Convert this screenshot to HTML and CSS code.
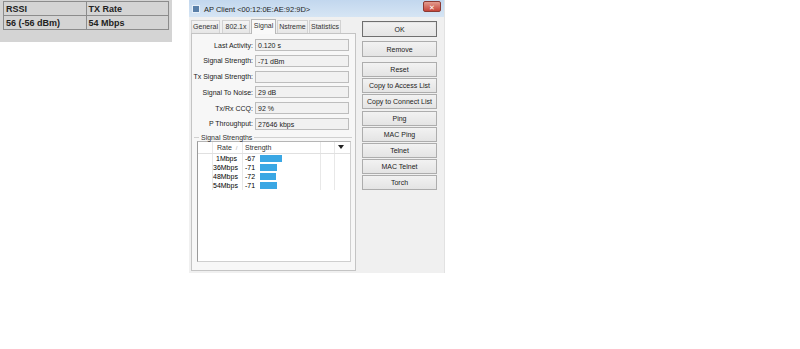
FILE: index.html
```html
<!DOCTYPE html>
<html lang="en">
<head>
    <meta charset="utf-8">
    <title>AP Client</title>
    <link rel="stylesheet" href="styles.css">
</head>
<body>
<div class="page">

    <div class="info"><!-- registration summary -->
        <table class="rates">
            <tr><td>RSSI</td><td>TX Rate</td></tr>
            <tr><td>56 (-56 dBm)</td><td>54 Mbps</td></tr>
        </table>
    </div>

    <div class="win">
        <div class="titlebar">
            <span class="appicon"></span>
            <span class="title">AP Client &lt;00:12:0E:AE:92:9D&gt;</span>
            <span class="close">&#x2715;</span>
        </div>

        <div class="winbody">
            <div class="left">
                <div class="tabs">
                    <span class="tab t-general">General</span>
                    <span class="tab t-dot">802.1x</span>
                    <span class="tab t-signal active">Signal</span>
                    <span class="tab t-nstreme">Nstreme</span>
                    <span class="tab t-stats">Statistics</span>
                </div>

                <div class="panel">
                    <div class="row"><span class="lbl">Last Activity:</span><span class="field">0.120 s</span></div>
                    <div class="row"><span class="lbl">Signal Strength:</span><span class="field">-71 dBm</span></div>
                    <div class="row"><span class="lbl">Tx Signal Strength:</span><span class="field"></span></div>
                    <div class="row"><span class="lbl">Signal To Noise:</span><span class="field">29 dB</span></div>
                    <div class="row"><span class="lbl">Tx/Rx CCQ:</span><span class="field">92 %</span></div>
                    <div class="row"><span class="lbl">P Throughput:</span><span class="field">27646 kbps</span></div>

                    <fieldset class="group">
                        <legend>Signal Strengths</legend>
                        <div class="grid">
                            <div class="gr head">
                                <span class="c0"></span>
                                <span class="c1">Rate<i class="sort">/</i></span>
                                <span class="c2">Strength</span>
                                <span class="c3"></span>
                                <span class="c4"><b class="arrow"></b></span>
                            </div>
                            <div class="gr"><span class="c0"></span><span class="c1 num">1Mbps</span><span class="c2">-67 <b class="bar" style="width:22px"></b></span><span class="c3"></span><span class="c4"></span></div>
                            <div class="gr"><span class="c0"></span><span class="c1 num">36Mbps</span><span class="c2">-71 <b class="bar" style="width:17px"></b></span><span class="c3"></span><span class="c4"></span></div>
                            <div class="gr"><span class="c0"></span><span class="c1 num">48Mbps</span><span class="c2">-72 <b class="bar" style="width:16px"></b></span><span class="c3"></span><span class="c4"></span></div>
                            <div class="gr"><span class="c0"></span><span class="c1 num">54Mbps</span><span class="c2">-71 <b class="bar" style="width:17px"></b></span><span class="c3"></span><span class="c4"></span></div>
                        </div>
                    </fieldset>
                </div>
            </div>

            <div class="right">
                <button class="btn ok">OK</button>
                <button class="btn sep">Remove</button>
                <button class="btn">Reset</button>
                <button class="btn">Copy to Access List</button>
                <button class="btn">Copy to Connect List</button>
                <button class="btn">Ping</button>
                <button class="btn">MAC Ping</button>
                <button class="btn">Telnet</button>
                <button class="btn">MAC Telnet</button>
                <button class="btn">Torch</button>
            </div>
        </div>
    </div>

</div>
</body>
</html>
```

FILE: styles.css
```css
body {
    margin: 0;
    background: #fff;
    font-family: "Liberation Sans", Arial, sans-serif;
    color: #000;
}

.page {
    display: flex;
    align-items: flex-start;
}

/* top-left summary table */
.info {
    width: 172px;
    height: 42px;
    background: #d4d4d4;
    padding: 1px 0 0 3px;
    box-sizing: border-box;
}

.rates {
    border-collapse: collapse;
    width: 166px;
    font-size: 9px;
    font-weight: bold;
    color: #222;
}

.rates td {
    border: 1px solid #8c8c8c;
    height: 13px;
    padding: 0 0 0 2px;
    width: 50%;
}

/* window */
.win {
    margin-left: 17px;
    width: 255px;
    height: 273px;
    background: #f0f0f0;
    border-right: 1px solid #e2e2e2;
    font-size: 7px;
}

.titlebar {
    height: 17px;
    display: flex;
    align-items: center;
    background: linear-gradient(#c2d7ee, #d6e5f4);
    position: relative;
}

.appicon {
    width: 6px;
    height: 6px;
    margin: 1px 4px 0 3px;
    background: #5a7fa8;
    border: 1px solid #e8f0f8;
}

.title {
    font-size: 7.5px;
    color: #1e1e1e;
    margin-top: 1px;
}

.close {
    position: absolute;
    right: 3px;
    top: 1px;
    width: 18px;
    height: 11px;
    background: linear-gradient(#e39b8e, #c6463a);
    border: 1px solid #8c3a33;
    border-radius: 2px;
    color: #fff;
    font-size: 7px;
    line-height: 11px;
    text-align: center;
    box-sizing: border-box;
}

.winbody {
    display: flex;
    align-items: flex-start;
}

.left {
    width: 165px;
    margin-left: 2px;
}

.tabs {
    display: flex;
    height: 14px;
    margin-top: 2px;
    align-items: flex-end;
}

.tab {
    height: 13px;
    line-height: 12px;
    border: 1px solid #d2d2d2;
    border-bottom: none;
    background: linear-gradient(#f4f4f4, #e6e6e6);
    color: #333;
    text-align: center;
    box-sizing: border-box;
    margin-right: 1px;
}

.t-general { width: 29px; }
.t-dot { width: 28px; margin-left: 1px; }
.t-signal { width: 25px; }
.t-nstreme { width: 31px; }
.t-stats { width: 32px; }

.tab.active {
    height: 15px;
    line-height: 11px;
    background: #f9f9f9;
    border-color: #b8b8b8;
    margin-bottom: -1px;
    position: relative;
    z-index: 1;
}

.panel {
    height: 238px;
    border: 1px solid #c4c4c4;
    background: #f7f7f7;
    box-sizing: border-box;
    padding-top: 5px;
}

.row {
    display: flex;
    align-items: center;
    height: 12px;
    margin-bottom: 3.8px;
}

.lbl {
    width: 61px;
    padding-right: 2px;
    text-align: right;
    color: #222;
}

.field {
    width: 94px;
    height: 12px;
    line-height: 11px;
    padding-left: 2px;
    border: 1px solid #bdbdbd;
    background: #f1f1f1;
    box-sizing: border-box;
    color: #222;
}

.group {
    margin: 0 3px 0 2px;
    padding: 0 1px 0 3px;
    border: none;
    border-top: 1px solid #d0d0d0;
}

.group legend {
    padding: 0 2px;
    margin-left: 2px;
    color: #333;
}

.grid {
    height: 119px;
    background: #fff;
    border: 1px solid #9a9a9a;
    border-color: #b5b5b5 #cfcfcf #cfcfcf #9a9a9a;
}

.gr {
    display: flex;
    height: 9px;
    line-height: 9px;
}

.gr.head {
    height: 11px;
    line-height: 11px;
    border-bottom: 1px solid #e0e0e0;
}

.gr span {
    border-right: 1px solid #e8e8e8;
    box-sizing: border-box;
    white-space: nowrap;
}

.c0 { width: 15px; }
.c1 { width: 30px; padding-left: 4px; }
.c2 { width: 78px; padding-left: 2px; display: flex; align-items: center; }
.c3 { width: 14px; }
.c4 { width: 12px; border-right: none !important; display: flex; align-items: center; justify-content: center; }

.c1.num {
    text-align: right;
    padding: 0 5px 0 0;
}

.sort {
    font-style: normal;
    font-size: 6px;
    color: #aaa;
    margin-left: 4px;
}

.head .c1, .head .c2 { color: #333; }

.bar {
    display: inline-block;
    height: 7px;
    margin-left: 5px;
    background: #3aa7e4;
}

.arrow {
    width: 0;
    height: 0;
    border-left: 3px solid transparent;
    border-right: 3px solid transparent;
    border-top: 4px solid #222;
}

/* buttons column */
.right {
    display: flex;
    flex-direction: column;
    width: 75px;
    margin-left: 6px;
    padding-top: 4px;
}

.btn {
    height: 15px;
    margin: 0 0 1.2px 0;
    padding: 0;
    font-family: "Liberation Sans", Arial, sans-serif;
    font-size: 7px;
    color: #222;
    border: 1px solid #adadad;
    background: linear-gradient(#f2f2f2, #e4e4e4);
}

.btn.ok {
    height: 16px;
    border: 1px solid #6f6f6f;
    box-shadow: inset 0 0 0 1px #e6e6e6;
    margin-bottom: 4px;
}

.btn.sep {
    height: 16px;
    margin-bottom: 5px;
}
```
